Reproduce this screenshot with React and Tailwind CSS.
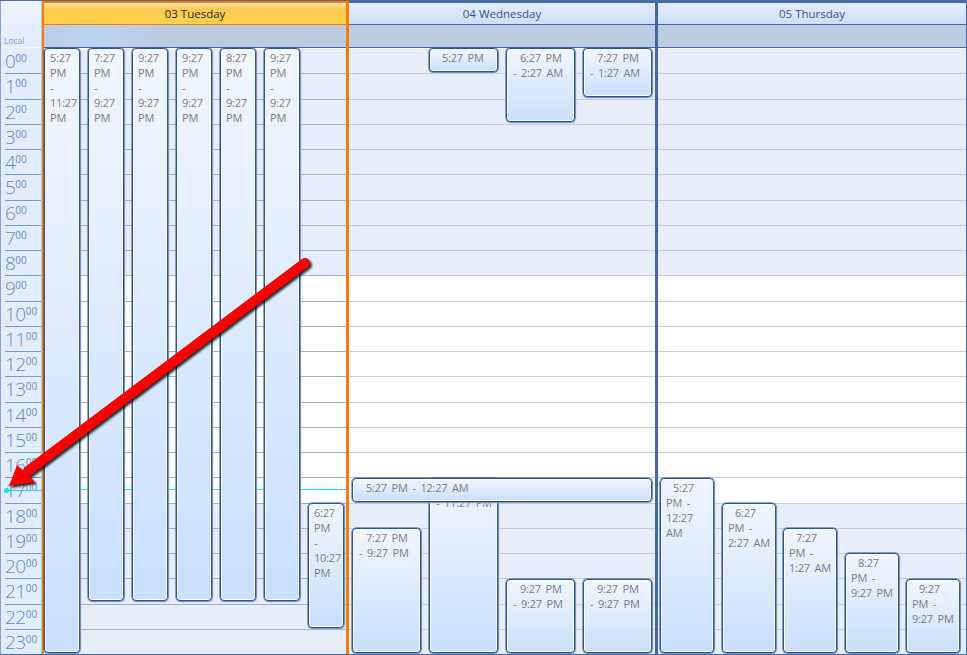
const FONT = "font-['Open_Sans','Noto_Sans',sans-serif]";
const hours = Array.from({ length: 24 }, (_, i) => i);
const shaded = (h) => h < 9 || h >= 18;

const base =
  "absolute overflow-hidden rounded-[4px] border border-[#2a5592] bg-gradient-to-b from-[#f1f6ff] to-[#c9dffc] shadow-[inset_0_0_0_1px_#ffffff,0_0_0_0.5px_#2a5592,1px_1px_2px_#b9c4d8] text-[11px] tracking-[-0.2px] [word-spacing:2px] leading-[15px] text-[#7b7b88]";

function Ev({ cls, lines, pad = "pt-[1px] pl-[5px]" }) {
  return (
    <div className={`${base} ${cls} ${pad}`}>
      {lines.map((l, i) => (
        <div key={i} className={`whitespace-pre ${l[1] || ""}`}>
          {l[0]}
        </div>
      ))}
    </div>
  );
}

function Rows({ line }) {
  return (
    <div className="absolute inset-x-0 top-[1px] bottom-[-1px] flex flex-col">
      {hours.map((h) => (
        <div
          key={h}
          className={`flex-1 border-b ${line} ${shaded(h) ? "bg-[#e7eef9]" : "bg-white"}`}
        />
      ))}
    </div>
  );
}

function Header({ title, today }) {
  return (
    <div className="flex flex-col h-[45px] shrink-0">
      <div
        className={`h-[22px] flex items-center justify-center text-[11.5px] border-b ${
          today
            ? "bg-gradient-to-b from-[#ffe9a8] via-[#ffc950] via-30% to-[#ffd24e] border-[#ff7a00] text-[#1e2a2a]"
            : "bg-gradient-to-b from-[#e2ecfd] to-[#cfdffa] border-[#3f66a6] text-[#3a5488]"
        }`}
      >
        {title}
      </div>
      <div
        className={`flex-1 border-b border-[#3f66a6] ${
          today
            ? "bg-gradient-to-r from-[#bccde4] via-[#bbd3f1] via-15% to-[#bccbe2] to-40%"
            : "bg-[#bccce2]"
        }`}
      />
    </div>
  );
}

const tueLines = (a, b) => [[a], ["PM"], ["-"], [b], ["PM"]];
const wedLines = (a, b) => [[a, "pl-[7px]"], [b]];
const wedPad = "pt-[1px] pl-[6px]";

export default function App() {
  return (
    <div className={`relative w-[967px] h-[655px] overflow-hidden flex bg-white border-y border-[#4a6da7] ${FONT}`}>
      {/* time ruler */}
      <div className="w-[42px] shrink-0 flex flex-col bg-[#e3ecfb] border-l border-[#86a3cf] border-r border-r-[#b9cbe6]">
        <div className="h-[47px] shrink-0 flex items-end pl-[3px] text-[8.5px] leading-[12px] text-[#7d9fce] bg-gradient-to-b from-[#eef4fe] to-[#e3ecfb] border-b border-[#f2f6fe]">
          Local
        </div>
        <div className="flex-1 min-h-0 flex flex-col pl-[4px] pt-[1px]">
          {hours.map((h) => (
            <div
              key={h}
              className="flex-1 min-h-0 flex items-start border-b border-[#6f9bd2] text-[#5f8dcb] last:border-b-0"
            >
              <span className="text-[19px] leading-[24px] font-light tracking-[-0.5px]">{h}</span>
              <span className="text-[10px] leading-[18px] font-normal">00</span>
            </div>
          ))}
        </div>
      </div>

      {/* Tuesday */}
      <div className="w-[307px] shrink-0 flex flex-col border-l-2 border-r-[3px] border-t-2 border-[#ff7a00]">
        <Header title="03 Tuesday" today />
        <div className="relative flex-1">
          <Rows line="border-[#a3aecb]" />
          <div className="absolute left-0 right-0 top-[441px] h-[1px] bg-[#12e0f2]" />
          <Ev cls="left-[0px] top-[0px] w-[36px] h-[605px]" lines={tueLines("5:27", "11:27")} />
          <Ev cls="left-[44px] top-[0px] w-[36px] h-[553px]" lines={tueLines("7:27", "9:27")} />
          <Ev cls="left-[88px] top-[0px] w-[36px] h-[553px]" lines={tueLines("9:27", "9:27")} />
          <Ev cls="left-[132px] top-[0px] w-[36px] h-[553px]" lines={tueLines("9:27", "9:27")} />
          <Ev cls="left-[176px] top-[0px] w-[36px] h-[553px]" lines={tueLines("8:27", "9:27")} />
          <Ev cls="left-[220px] top-[0px] w-[36px] h-[553px]" lines={tueLines("9:27", "9:27")} />
          <Ev cls="left-[264px] top-[455px] w-[36px] h-[125px]" lines={tueLines("6:27", "10:27")} />
        </div>
      </div>

      {/* Wednesday */}
      <div className="w-[309px] shrink-0 flex flex-col border-t-2 border-r-[3px] border-[#44689f]">
        <Header title="04 Wednesday" />
        <div className="relative flex-1">
          <Rows line="border-[#c5cce2]" />
          <Ev cls="left-[80px] top-[0px] w-[69px] h-[24px]" pad="pt-[1px] pl-[12px]" lines={[["5:27 PM"]]} />
          <Ev cls="left-[157px] top-[0px] w-[69px] h-[74px]" lines={wedLines("6:27 PM", "- 2:27 AM")} pad={wedPad} />
          <Ev cls="left-[234px] top-[0px] w-[69px] h-[49px]" lines={wedLines("7:27 PM", "- 1:27 AM")} pad={wedPad} />
          <Ev cls="left-[80px] top-[430px] w-[69px] h-[175px]" lines={wedLines("5:27 PM", "- 11:27 PM")} pad={wedPad} />
          <Ev cls="left-[3px] top-[430px] w-[300px] h-[24px]" pad="pt-[1px] pl-[13px]" lines={[["5:27 PM - 12:27 AM"]]} />
          <Ev cls="left-[3px] top-[480px] w-[69px] h-[125px]" lines={wedLines("7:27 PM", "- 9:27 PM")} pad={wedPad} />
          <Ev cls="left-[157px] top-[531px] w-[69px] h-[74px]" lines={wedLines("9:27 PM", "- 9:27 PM")} pad={wedPad} />
          <Ev cls="left-[234px] top-[531px] w-[69px] h-[74px]" lines={wedLines("9:27 PM", "- 9:27 PM")} pad={wedPad} />
        </div>
      </div>

      {/* Thursday */}
      <div className="flex-1 flex flex-col border-t-2 border-r border-[#44689f]">
        <Header title="05 Thursday" />
        <div className="relative flex-1">
          <Rows line="border-[#c5cce2]" />
          <Ev cls="left-[2px] top-[430px] w-[54px] h-[175px]" lines={[["5:27", "pl-[7px]"], ["PM -"], ["12:27"], ["AM"]]} />
          <Ev cls="left-[64px] top-[455px] w-[54px] h-[150px]" lines={[["6:27", "pl-[7px]"], ["PM -"], ["2:27 AM"]]} />
          <Ev cls="left-[125px] top-[480px] w-[54px] h-[125px]" lines={[["7:27", "pl-[7px]"], ["PM -"], ["1:27 AM"]]} />
          <Ev cls="left-[187px] top-[505px] w-[54px] h-[100px]" lines={[["8:27", "pl-[7px]"], ["PM -"], ["9:27 PM"]]} />
          <Ev cls="left-[248px] top-[531px] w-[54px] h-[74px]" lines={[["9:27", "pl-[7px]"], ["PM -"], ["9:27 PM"]]} />
        </div>
      </div>

      {/* current-time marker on the ruler */}
      <div className="absolute left-[6px] top-[489px] w-[36px] h-[1px] bg-[#12e0f2]" />
      <div className="absolute left-[3.5px] top-[487px] w-[5px] h-[5px] rounded-full bg-[#12e0f2]" />

      {/* annotation arrow */}
      <svg className="absolute left-0 top-[-1px] pointer-events-none" width="967" height="655" viewBox="0 0 967 655">
        <defs>
          <filter id="arrow-shadow" x="-10%" y="-10%" width="120%" height="120%">
            <feGaussianBlur stdDeviation="1.2" />
          </filter>
        </defs>
        <g filter="url(#arrow-shadow)" opacity="0.8" transform="translate(2 2)">
          <line x1="305" y1="263" x2="28" y2="471" stroke="#000" strokeWidth="10" strokeLinecap="round" />
          <polygon points="9,486 17,465 35,482" fill="#000" />
        </g>
        <line x1="305" y1="263" x2="28" y2="471" stroke="#f80000" strokeWidth="10" strokeLinecap="round" />
        <polygon points="9,486 17,465 35,482" fill="#f80000" />
      </svg>
    </div>
  );
}
